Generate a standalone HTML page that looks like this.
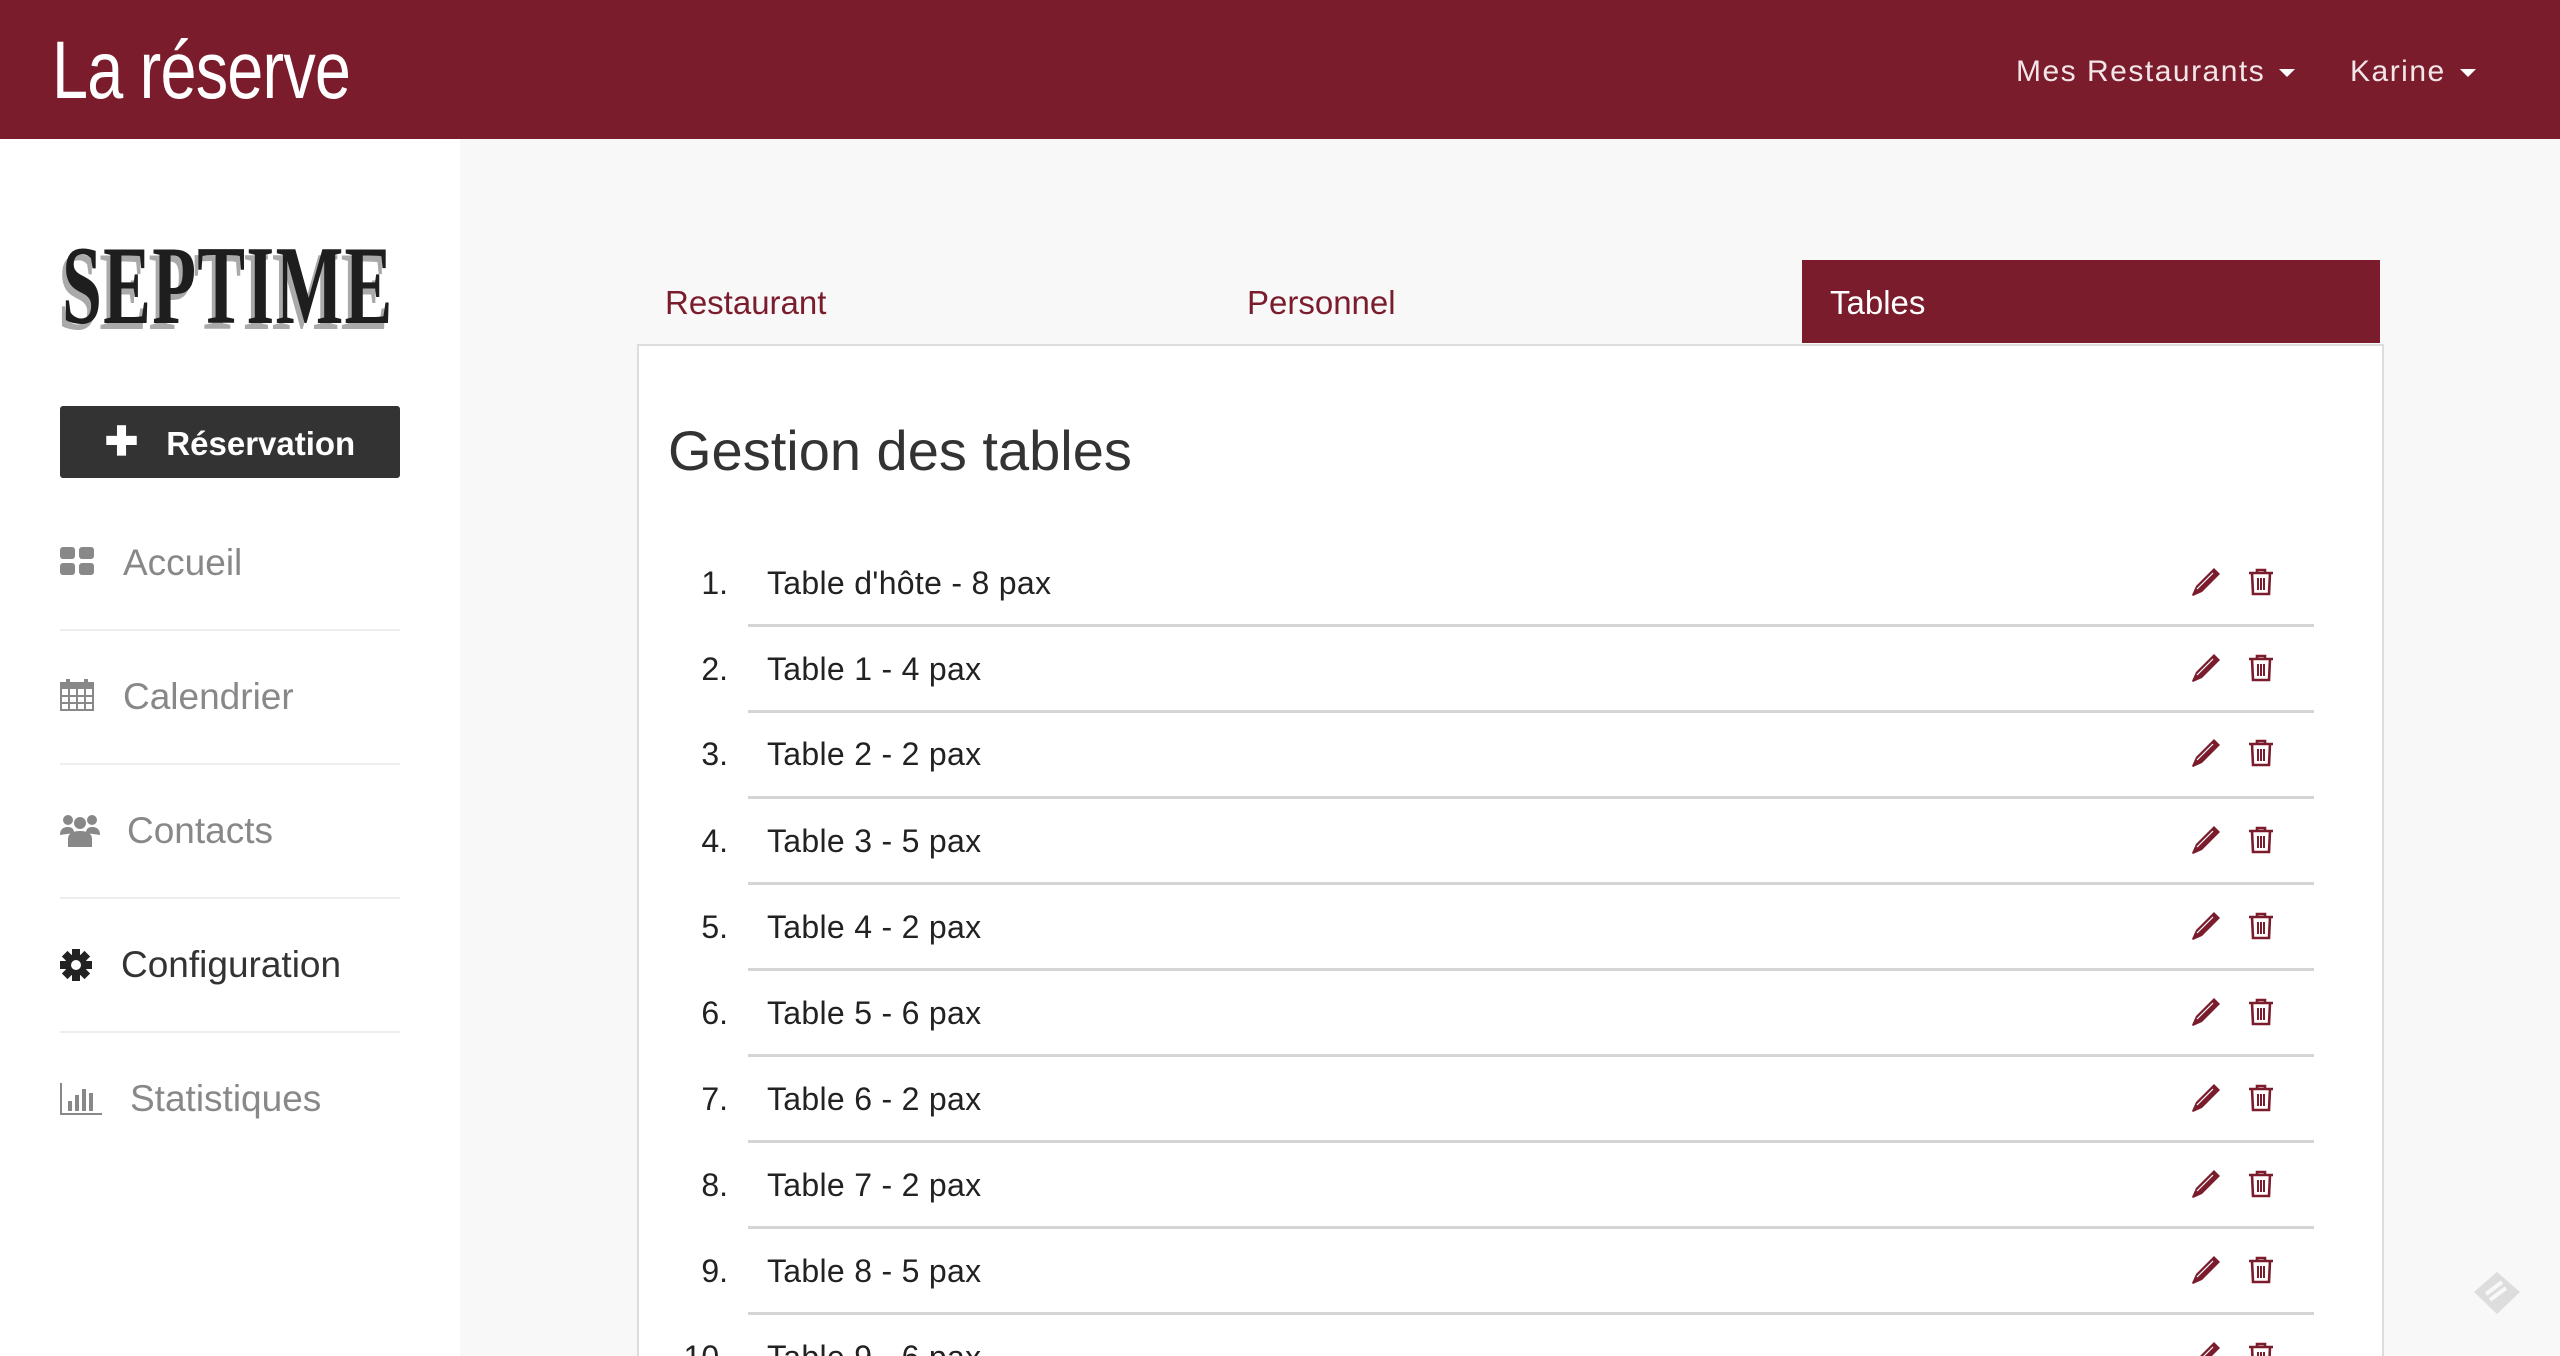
<!DOCTYPE html>
<html><head><meta charset="utf-8"><style>
*{margin:0;padding:0;box-sizing:border-box}
html,body{width:2560px;height:1356px;overflow:hidden}
body{background:#f8f8f8;font-family:"Liberation Sans",sans-serif}
#wrap{position:relative;width:2560px;height:1356px;overflow:hidden}
.hdr{position:absolute;left:0;top:0;width:2560px;height:139px;background:#7b1c2c}
.brand{position:absolute;left:52px;top:24px;color:#fff;font-size:82px;letter-spacing:-1px;transform:scaleX(.79);transform-origin:left}
.nav{position:absolute;top:55px;color:#f3e6e8;font-size:30px;letter-spacing:1.5px}
.caret{display:inline-block;width:0;height:0;border-left:8px solid transparent;border-right:8px solid transparent;border-top:8px solid #fff;vertical-align:middle;margin-left:14px}
.side{position:absolute;left:0;top:139px;width:460px;height:1217px;background:#fff}
.logo{position:absolute;left:62px;font-family:"Liberation Serif",serif;font-weight:bold;font-size:112px;color:#1e1e1e;transform:scaleX(.64);transform-origin:left;text-shadow:-6px 6px 0 #aaa;letter-spacing:2px}
.btn{position:absolute;left:60px;width:340px;height:72px;background:#333;border-radius:3px;color:#fff;font-size:33px;font-weight:bold;line-height:72px;text-align:center}
.mi{position:absolute;left:60px;font-size:37px;color:#888;height:40px;line-height:40px}
.mi svg{position:absolute;left:0;top:4px}
.sep{position:absolute;left:60px;width:340px;height:2px;background:#eee}
.tab{position:absolute;top:260px;height:83px;line-height:86px;font-size:33px;color:#7b1c2c}
.panel{position:absolute;left:637px;top:344px;width:1747px;height:1012px;background:#fff;border:2px solid #ddd;border-bottom:none}
h1{position:absolute;left:668px;top:418px;font-size:56px;font-weight:normal;color:#333}
.row{position:absolute;left:0;width:2560px;height:40px;line-height:40px;font-size:32px;color:#222}
.num{position:absolute;right:1832px;text-align:right}
.txt{position:absolute;left:767px;letter-spacing:.3px}
.ln{position:absolute;left:748px;width:1566px;height:3px;background:#d5d5d5}
</style></head><body><div id="wrap">
<div class="hdr"><div class="brand">La réserve</div>
<div class="nav" style="left:2016px">Mes Restaurants<span class="caret"></span></div>
<div class="nav" style="left:2350px">Karine<span class="caret"></span></div></div>
<div class="side">
<div class="logo" style="top:83px">SEPTIME</div>
<div class="btn" style="top:267px"><span style="font-size:40px;margin-right:28px">✚</span>Réservation</div>
</div>
<div class="mi" style="top:543px"><svg width="34" height="28" viewBox="0 0 34 28"><rect x="0" y="0" width="15" height="12" rx="3" fill="#888"/><rect x="19" y="0" width="15" height="12" rx="3" fill="#888"/><rect x="0" y="16" width="15" height="12" rx="3" fill="#888"/><rect x="19" y="16" width="15" height="12" rx="3" fill="#888"/></svg><span style="margin-left:63px">Accueil</span></div>
<div class="sep" style="top:629px"></div>
<div class="mi" style="top:677px"><svg width="34" height="32" viewBox="0 0 34 32" style="top:2px"><rect x="1" y="4" width="32" height="27" fill="none" stroke="#888" stroke-width="2"/><rect x="1" y="4" width="32" height="6" fill="#888"/><path d="M1 17H33M1 24H33M9 10V31M17 10V31M25 10V31" stroke="#888" stroke-width="2"/><rect x="6" y="0" width="4" height="8" fill="#888"/><rect x="24" y="0" width="4" height="8" fill="#888"/></svg><span style="margin-left:63px">Calendrier</span></div>
<div class="sep" style="top:763px"></div>
<div class="mi" style="top:811px"><svg width="40" height="32" viewBox="0 0 40 32"><circle cx="8" cy="5" r="5" fill="#888"/><circle cx="32" cy="5" r="5" fill="#888"/><circle cx="20" cy="8" r="6" fill="#888"/><path d="M0 20Q0 12 8 12Q14 12 14 18ZM40 20Q40 12 32 12Q26 12 26 18Z" fill="#888"/><path d="M8 32V24Q8 16 20 16Q32 16 32 24V32Z" fill="#888"/></svg><span style="margin-left:67px">Contacts</span></div>
<div class="sep" style="top:897px"></div>
<div class="mi" style="top:945px;color:#333"><svg width="32" height="32" viewBox="0 0 32 32"><g fill="#222"><circle cx="16" cy="16" r="11"/><rect x="12" y="0" width="8" height="32"/><rect x="0" y="12" width="32" height="8"/><rect x="12" y="0" width="8" height="32" transform="rotate(45 16 16)"/><rect x="12" y="0" width="8" height="32" transform="rotate(-45 16 16)"/></g><circle cx="16" cy="16" r="5" fill="#fff"/></svg><span style="margin-left:61px">Configuration</span></div>
<div class="sep" style="top:1031px"></div>
<div class="mi" style="top:1079px"><svg width="42" height="32" viewBox="0 0 42 32"><path d="M1 0V31H42" fill="none" stroke="#888" stroke-width="2"/><rect x="8" y="18" width="4" height="10" fill="#888"/><rect x="15" y="12" width="4" height="16" fill="#888"/><rect x="22" y="6" width="4" height="22" fill="#888"/><rect x="29" y="10" width="4" height="18" fill="#888"/></svg><span style="margin-left:70px">Statistiques</span></div>

<div class="tab" style="left:665px">Restaurant</div>
<div class="tab" style="left:1247px">Personnel</div>
<div class="tab" style="left:1802px;width:578px;background:#7b1c2c;color:#fff;padding-left:28px">Tables</div>
<div class="panel"></div>
<h1>Gestion des tables</h1>

<div class="row" style="top:563px"><span class="num">1.</span><span class="txt">Table d'hôte - 8 pax</span></div>
<div class="row" style="top:649px"><span class="num">2.</span><span class="txt">Table 1 - 4 pax</span></div>
<div class="row" style="top:734px"><span class="num">3.</span><span class="txt">Table 2 - 2 pax</span></div>
<div class="row" style="top:821px"><span class="num">4.</span><span class="txt">Table 3 - 5 pax</span></div>
<div class="row" style="top:907px"><span class="num">5.</span><span class="txt">Table 4 - 2 pax</span></div>
<div class="row" style="top:993px"><span class="num">6.</span><span class="txt">Table 5 - 6 pax</span></div>
<div class="row" style="top:1079px"><span class="num">7.</span><span class="txt">Table 6 - 2 pax</span></div>
<div class="row" style="top:1165px"><span class="num">8.</span><span class="txt">Table 7 - 2 pax</span></div>
<div class="row" style="top:1251px"><span class="num">9.</span><span class="txt">Table 8 - 5 pax</span></div>
<div class="row" style="top:1337px;height:19px;overflow:hidden"><span class="num">10.</span><span class="txt">Table 9 - 6 pax</span></div>

<div class="ln" style="top:624px"></div><div class="ln" style="top:710px"></div><div class="ln" style="top:796px"></div><div class="ln" style="top:882px"></div><div class="ln" style="top:968px"></div><div class="ln" style="top:1054px"></div><div class="ln" style="top:1140px"></div><div class="ln" style="top:1226px"></div><div class="ln" style="top:1312px"></div>

<svg width="0" height="0" style="position:absolute"><defs>
<g id="pen"><path d="M22 0L28 6L10 24L1 28L0 27L4 18Z" fill="#7b1c2c"/><path d="M5 21L21 5" stroke="#fff" stroke-width="1.2"/></g>
<g id="bin" fill="none" stroke="#7b1c2c" stroke-width="2.6"><path d="M1 5H25M9 5V2H17V5M4 5L5 26H21L22 5"/><path d="M10 10V22M13 10V22M16 10V22" stroke-width="2"/></g>
</defs></svg>
<svg style="position:absolute;left:2192px;top:568px" width="120" height="788" viewBox="0 0 120 788">
<use href="#pen" x="0" y="0"/><use href="#bin" x="56" y="0"/>
<use href="#pen" x="0" y="86"/><use href="#bin" x="56" y="86"/>
<use href="#pen" x="0" y="171"/><use href="#bin" x="56" y="171"/>
<use href="#pen" x="0" y="258"/><use href="#bin" x="56" y="258"/>
<use href="#pen" x="0" y="344"/><use href="#bin" x="56" y="344"/>
<use href="#pen" x="0" y="430"/><use href="#bin" x="56" y="430"/>
<use href="#pen" x="0" y="516"/><use href="#bin" x="56" y="516"/>
<use href="#pen" x="0" y="602"/><use href="#bin" x="56" y="602"/>
<use href="#pen" x="0" y="688"/><use href="#bin" x="56" y="688"/>
<use href="#pen" x="0" y="774"/><use href="#bin" x="56" y="774"/>
</svg>
<svg style="position:absolute;left:2472px;top:1270px" width="50" height="46" viewBox="0 0 50 46"><path d="M25 2L48 22L25 44L2 22Z" fill="#ddd"/><path d="M14 24L30 12M18 30L34 18" stroke="#f8f8f8" stroke-width="4"/></svg>
</div></body></html>
